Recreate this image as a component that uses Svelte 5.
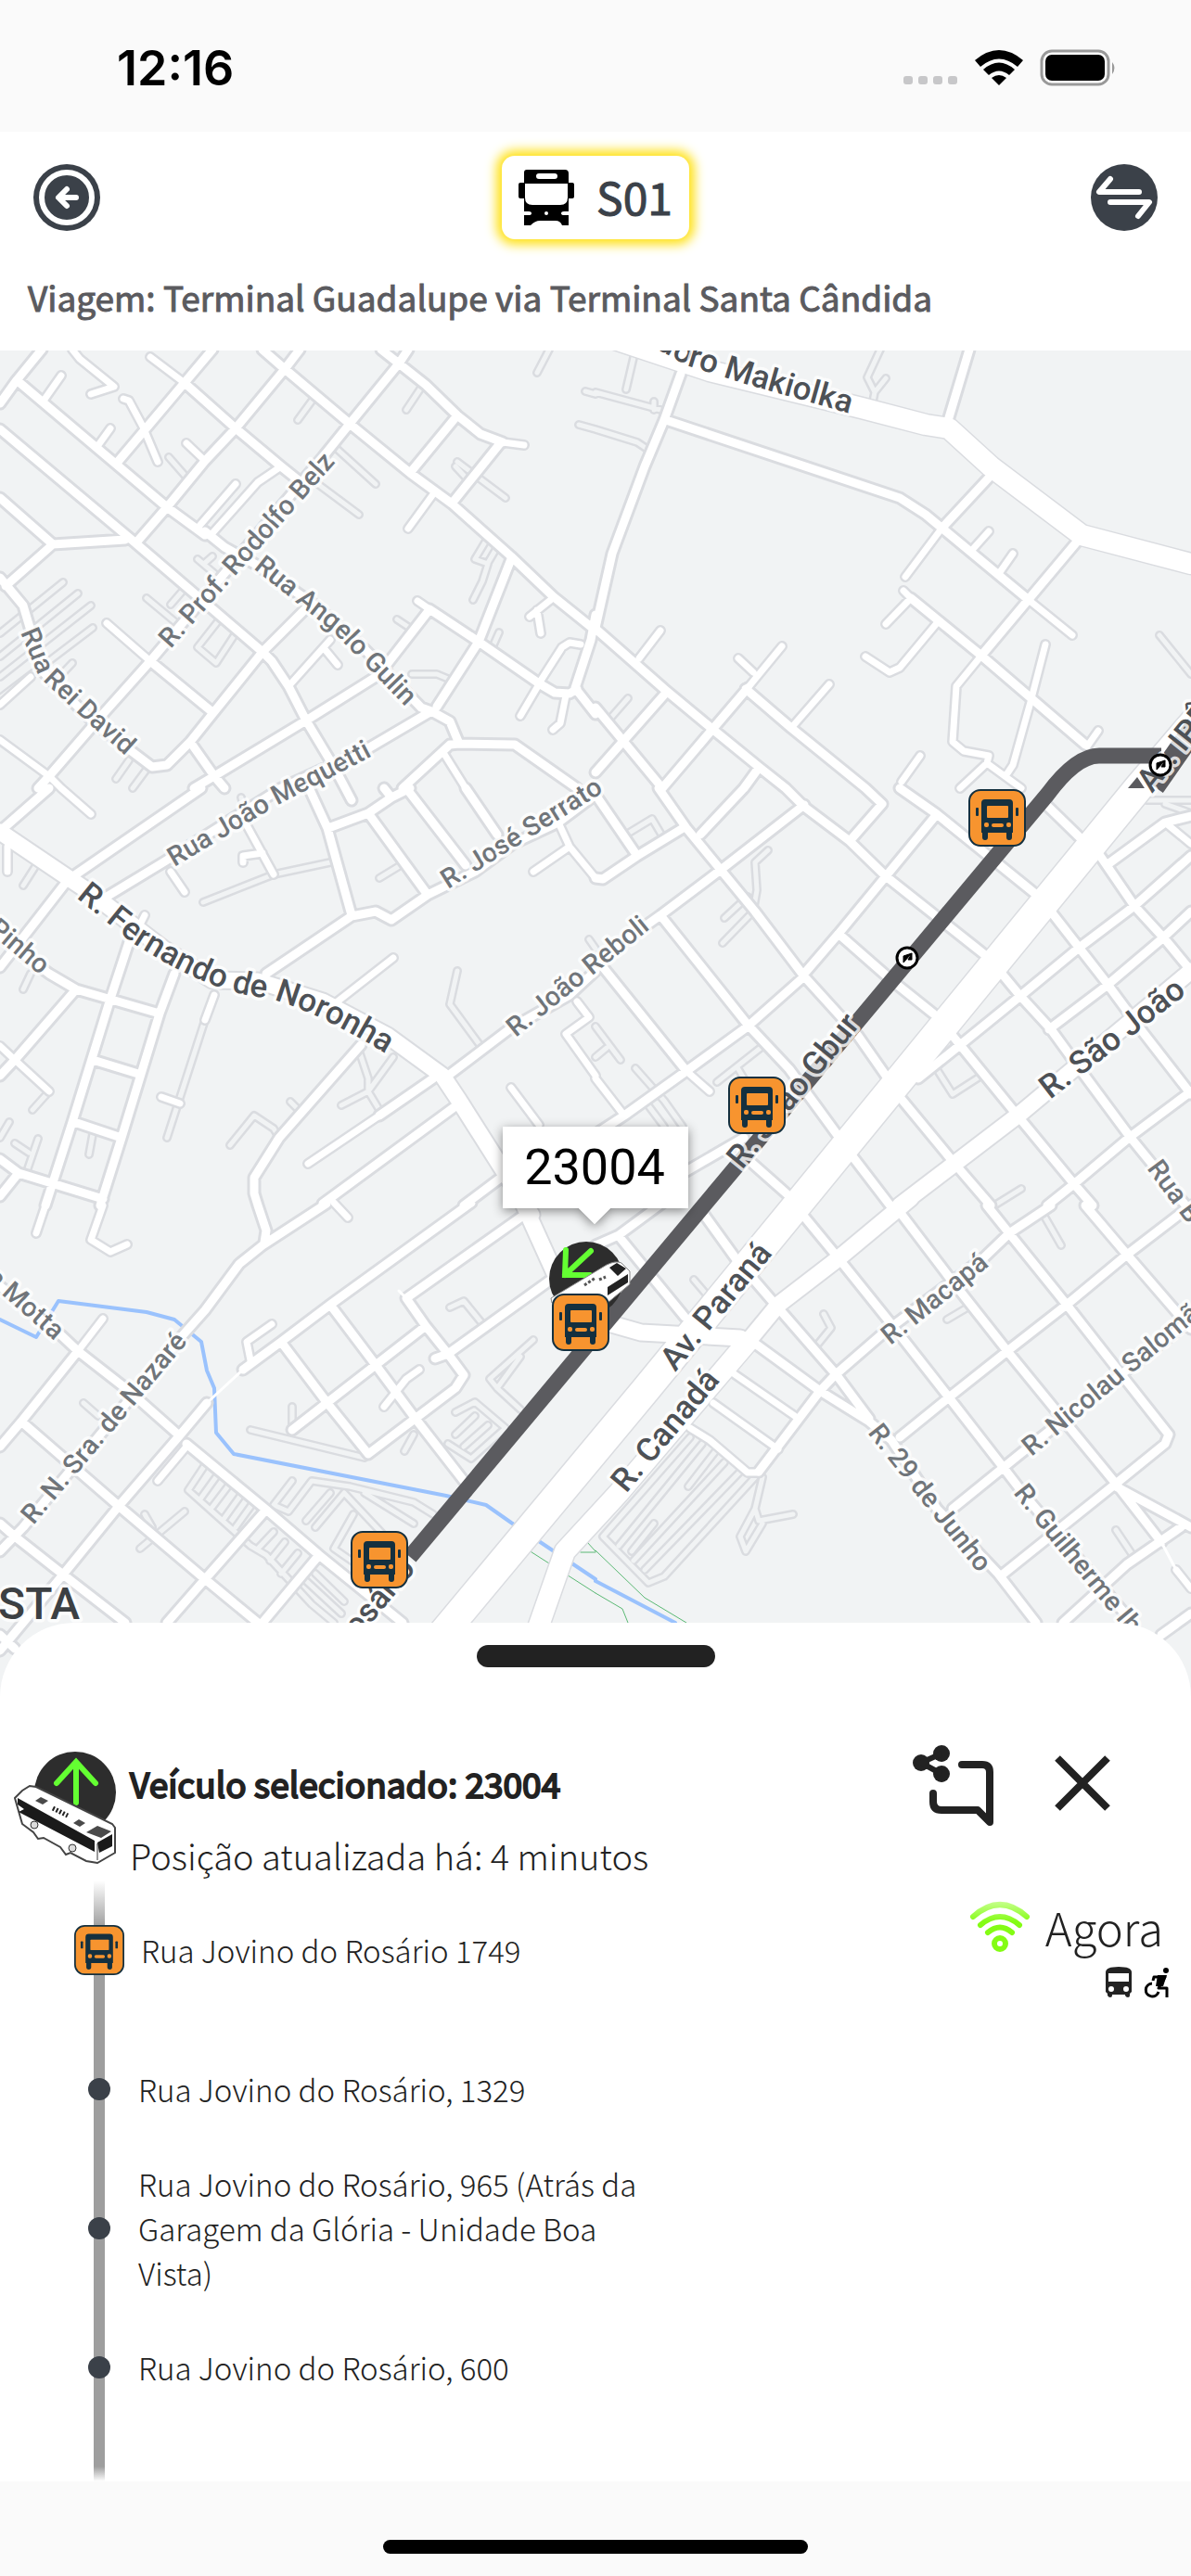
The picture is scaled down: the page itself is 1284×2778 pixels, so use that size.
<script>
  // Roads are digitised per map sheet; every sheet has its own origin on the map
  const sheets = {
    a: [0, 370],
    b: [642, 370],
    c: [0, 850],
    d: [642, 850],
    e: [0, 1300],
    f: [642, 1300],
  };

  function toPath(line) {
    const [sheet, ...points] = line.trim().split(/\s+/);
    const [ox, oy] = sheets[sheet];
    return (
      "M" +
      points
        .map((point) => {
          const [x, y] = point.split(",").map(Number);
          return `${Math.round(ox + x / 2.4424)} ${Math.round(oy + y / 3)}`;
        })
        .join("L")
    );
  }

  const toPaths = (text) => text.trim().split("\n").map(toPath).join("");

  const streets = toPaths(`
    a 110,20 45,120 0,195
    a 45,120 440,530 540,620
    a 0,280 350,640 690,1000 715,1030 760,1110 805,1220 880,1370 925,1480
    a 485,130 620,275 740,400 800,460
    a 560,20 310,385
    a 790,20 750,85 620,275 540,380 440,530 360,645
    a 690,20 750,85 920,260 1080,420 1190,520 1345,690 1455,820 1568,930
    a 1075,20 1050,65 920,260 850,370 395,1030 270,1200 130,1400 100,1440
    a 1005,20 1050,65 1120,135 1205,235 1265,295 1325,320
    a 1205,235 1080,420
    a 1320,320 1190,520
    a 0,500 140,650 330,635
    a 140,650 15,785
    a 0,760 60,850 80,930 110,1060 250,1230 400,1370 440,1365 500,1290 560,1200 690,1000 820,840
    a 395,1030 560,1195
    a 500,1290 565,1400 590,1440
    a 990,1080 805,1220 565,1400 510,1440
    a 540,610 590,660 680,720 830,850 960,990 1110,1180 1135,1190 1185,1225 1210,1295
    a 1135,1190 970,1310 740,1440
    a 1210,1295 1185,1300 1060,1440
    a 1210,1295 1355,1300 1520,1440
    a 1345,700 1260,965 1150,1175
    a 1130,860 1260,965 1420,1100 1460,1130 1500,1135 1520,1120
    a 1125,870 1000,1070
    a 1568,880 1555,960 1515,1115 1568,1200
    b 985,20 940,200 925,260
    b 225,100 180,250 130,400 45,680 0,920
    b 185,250 800,500 870,555 1140,830
    b 1040,430 910,600
    b 1270,640 1015,1010
    b 830,825 1015,1010 1290,1300
    b 0,925 180,1120 310,1250 430,1370 500,1440
    b 185,1130 0,1390
    b 400,1115 175,1440
    b 395,1120 515,1245 710,1440
    b 0,1180 175,1440
    b 430,1375 390,1440
    c 130,0 10,130
    c 530,0 185,290
    c 170,310 0,580
    c 740,0 430,240 280,350
    c 805,-20 862,130 925,410
    c 865,130 970,80 1030,30 1080,0
    c 1010,0 1030,30
    c 970,80 1125,345
    c 1070,0 1225,250
    c 1225,0 1310,150
    c 700,600 925,415 990,400 1030,425 1125,345 1250,270 1350,180 1470,110 1568,20
    c 0,480 130,600 200,650 420,730
    c 200,650 40,880 0,930
    c 345,480 290,680 190,1080 120,1350
    c 460,600 420,730 320,1130 265,1350
    c 245,880 365,925
    c 195,1080 320,1130
    c 0,1200 50,1245 270,1330
    c 50,1245 0,1320
    c 950,830 735,1130 670,1260 670,1310 680,1350
    c 1180,930 1340,780 1500,670 1568,590
    c 1140,940 1000,1060
    c 1200,1030 850,1345
    c 1320,1260 1220,1350
    d 500,0 550,60 670,170 765,285 1025,540
    d 710,0 755,50 670,170
    d 800,0 900,85 1155,340
    d 900,85 765,285 640,470 550,600
    d 640,470 780,620 890,730
    d 1180,45 1280,165
    d 550,55 330,265 170,410 0,560
    d 165,0 240,130 330,265 420,400 550,610 690,800 765,930
    d 390,0 275,150
    d 0,20 110,220
    d 235,125 110,220 20,295 0,290
    d 170,410 400,765 510,910 635,1120
    d 550,610 400,770 240,915 75,1060 0,1120
    d 20,580 240,915
    d 380,1180 510,1320
    d 390,1130 240,1240
    d 1325,210 1420,380 1500,490 1568,590
    d 1200,400 1345,630 1440,790 1568,990
    d 1070,600 1115,670 1200,780 1270,900 1410,1130 1568,1370
    d 940,800 1100,1040 1260,1280 1310,1350
    d 800,1000 950,1220 1040,1350
    d 670,1180 790,1370
    d 1568,220 1420,380 1270,520 1115,675 960,830 850,940
    d 1568,400 1490,490 1345,640 1195,780
    d 1568,90 1500,110 1345,250
    d 1568,980 1405,1130 1250,1290 1190,1350
    e 680,0 700,80 695,120
    e 860,-5 690,130 630,190 540,340 480,420 60,1040 0,1120
    e 1240,-10 870,320 740,440 640,530
    e 545,640 470,750 315,970 165,1195 0,1440
    e 1370,40 1070,300 1120,390 1180,480 1220,550 1200,590 970,805
    e 740,440 860,635 970,805
    e 870,320 990,515 1095,690 1220,890
    e 1120,390 770,725
    e 1450,240 1180,480 1145,495
    e 0,260 160,420 205,470 340,600 470,740
    e 490,770 700,985 840,1130 1060,1350
    e 205,470 55,700 0,780
    e 55,700 315,975 540,1210 680,1350
    e 0,1030 40,1070 165,1195 330,1350
    e 700,985 540,1210 440,1350
    e 840,1130 690,1350
    e 0,1390 40,1435
    f 280,20 370,170 475,320 635,550 720,690
    f 60,100 235,360
    f 0,130 60,95 200,-30
    f 550,35 640,170 790,400 930,620 1075,850 1130,940 1400,1330
    f 800,20 930,230 1085,470 1235,700 1370,900 1490,1090
    f 1030,0 1090,90 1240,320 1400,570 1510,740 1500,770 1370,900 1075,1190
    f 1290,0 1400,160 1568,400
    f 1200,0 1090,90 1020,170 760,410 630,550 590,600 430,860
    f 1568,0 1400,160 1240,320 1085,470 930,620 800,750
    f 1568,370 1120,800 940,980
    f 1370,910 1568,1040
    f 1540,1040 1400,1160 1230,1350
    f 1568,1320 1490,1390
    f 400,430 590,600 720,700 780,760 900,980 1060,1190 1160,1350
  `);

  const lanes = toPaths(`
    a 395,45 485,130
    a 1325,320 1380,330
    a 280,905 395,1030
    a 1165,1320 1225,1440
    a 1100,835 1130,860
    a 1420,1105 1370,1205
    a 1490,1140 1475,1230 1455,1252
    a 1420,1100 1480,985 1500,970 1530,975
    a 1455,825 1395,885
    a 1415,865 1425,940
    a 190,20 210,50 300,140 240,165
    a 160,105 115,185
    a 325,180 340,185 375,270 415,385
    a 290,275 260,330
    a 490,325 540,380
    a 620,455 525,590
    a 740,400 680,450 560,615
    a 1140,490 1075,600
    a 80,1080 0,1170
    a 870,960 765,1105
    a 855,990 890,1040
    a 0,1285 130,1400 160,1440
    b 1140,830 1255,945
    b 910,600 815,755
    b 1015,1010 950,1110 940,1290 970,1320 1035,1335 1030,1360 960,1440
    b 810,800 830,825 765,910
    b 900,905 800,1050 775,1065 710,1015
    b 1035,610 995,665
    b 1100,680 1065,740
    b 1185,975 1145,1160 1100,1365 1080,1400
    b 1030,1360 1120,1440
    b 1325,1255 1295,1305
    b 170,930 115,1020
    b 490,980 400,1115
    b 375,1020 415,1065
    b 615,1105 515,1245
    b 855,1335 805,1420
    c 160,0 240,85
    c 20,190 20,270
    c 450,270 485,335
    c 650,120 720,280
    c 690,210 640,220 640,240
    c 1470,110 1500,190 1568,290
    c 1500,190 1405,270
    c 1035,550 880,700
    c 380,410 345,500
    c 0,835 40,880 130,980
    c 565,670 540,750
    c 425,1000 475,1020
    c 1000,1060 810,1215
    c 1345,970 1420,1090
    c 1520,690 1550,740 1490,795 1568,930
    d 0,940 75,1060
    d 240,915 300,980
    d 1500,110 1568,180
    e 120,0 95,90
    e 270,0 240,110 290,150 335,125
    e 880,-10 915,40
    e 715,385 650,440 660,500
    e 1105,530 1070,560 1010,650
    e 270,365 205,470
    e 490,780 415,890
    f 360,540 535,690
    f 310,640 480,790
    f 250,720 300,760 400,865 430,865
    f 1530,1180 1568,1240
  `);

  const alleys = toPaths(`
    a 445,370 495,440
    a 830,170 785,250
    a 1110,145 1070,215
    a 885,340 990,455
    a 820,440 945,555
    a 1445,20 1415,95
    a 1568,165 1540,155
    a 1568,280 1525,265
    a 1205,385 1330,500
    a 1200,400 1230,440
    a 1280,640 1250,700 1285,715 1270,770 1245,830
    a 1310,660 1285,710
    a 165,775 0,940
    a 205,810 0,1015
    a 240,850 0,1080
    a 245,920 0,1150
    a 190,1035 150,1090
    a 520,700 570,750
    a 385,825 460,900
    a 480,800 450,845
    a 560,690 540,710
    a 575,900 520,985 570,1035 620,940
    a 1045,895 1090,930
    a 1085,1070 1150,1070 1180,1085
    a 1315,935 1295,990
    a 340,1350 305,1410
    a 390,1370 350,1440
    b 750,20 715,110 735,160 730,190
    b 765,115 735,160
    b 0,160 180,220
    b 0,280 110,320 140,345
    b 105,20 80,150
    b 155,190 155,215
    b 85,1150 35,1220
    b 1485,945 1568,1070
    c 95,250 60,315
    c 80,600 60,650
    c 635,30 650,100
    c 870,240 720,280 535,370
    c 1055,250 1000,290
    c 130,980 85,1040
    c 245,1120 235,1185
    c 100,1135 70,1240
    c 40,1150 75,1180
    c 25,1080 0,1130
    c 540,750 440,1130
    c 945,850 970,940 970,980 900,1025
    c 1035,870 970,980 1000,1040
    c 765,1015 790,1045
    c 735,1130 720,1100 670,1060 605,1155
    c 1205,590 1185,700 1265,835
    c 1550,490 1568,520
    d 1120,1295 1050,1350
    d 895,900 940,990 1015,930
    d 1450,40 1568,40
    d 1500,50 1568,80
    d 80,150 150,100 180,165
    d 455,200 420,240 425,330 415,400 335,500
    d 400,350 340,420
    d 435,840 320,950
    d 375,910 390,940
    d 0,770 65,880
    d 30,840 0,870
    d 105,905 180,1010 230,1095
    d 130,1010 180,1095
    e 770,650 770,725
    e 660,725 960,815
    e 1185,330 1220,310 1275,390
    e 1090,740 1065,795
    e 1405,435 1290,560 1310,590 1370,660
    e 1370,490 1310,590
    e 220,640 260,680
    e 380,1000 400,1040
    e 485,990 370,1110
    e 540,840 495,920 660,1100 700,1130 820,1290 880,1350
    e 575,870 530,945
    e 605,900 560,975
    e 635,935 590,1010
    e 665,965 620,1040
    e 720,1055 680,1110
    e 750,1090 710,1150
    e 785,1125 740,1190
    e 770,890 720,970 760,990 820,890 920,910 1090,960 1140,1000
    e 870,930 805,1020
    e 905,930 830,1040
    e 905,930 1060,1130
    e 960,930 1090,1030
    e 930,1000 880,1110 960,1180
    e 800,1210 900,1320
    e 830,1190 905,1280
    e 1200,670 1250,635 1330,720 1240,820 1180,770
    e 1250,680 1200,740
    e 1285,710 1220,780
    f 250,750 20,1070 140,1220 180,1200 420,880
    f 280,770 60,1100
    f 340,830 100,1150
    f 380,860 130,1180
    f 320,790 245,910
    f 155,1030 95,1120
    f 440,880 420,980 430,1020 520,1000
    f 420,980 380,1070 395,1120 440,1030
    f 600,350 620,395 580,460
    f 980,330 925,370
    f 1180,30 1225,130
    f 260,240 300,300
    f 1370,1050 1420,1140
  `);

  const mainRoads = toPaths(`
    c 0,140 180,290 240,340 430,520 560,620 680,625 850,690 1020,800 1165,930 1210,1010 1400,1380
    e 1380,0 1460,220 1568,360
    f 0,370 120,410 380,430
    d 1568,590 1120,1050 800,1350
    f 830,-25 640,170 480,320 400,440
  `);

  const avenues = toPaths(`
    b 30,-20 300,90 700,210 870,265 930,275 1040,400 1280,620 1568,715
    f 400,440 60,930 -80,1120 -160,1400
  `);

  const expressway = toPaths(`
    d 1600,-245 1430,0 530,1350 130,1950 -500,2880
  `);

  const footpaths = toPaths(`
    e 640,530 545,640
    f 1490,1090 1530,1180
    e 1050,275 1070,300
  `);

  const river = toPaths(`
    e 0,370 95,425 155,310 385,345 460,370 530,440 545,535 565,590 568,735 615,805 1175,940 1280,968 1345,1025 1568,1210
    f 0,1215 210,1350
  `);

  const trails = toPaths(`
    e 485,740 500,770
    e 1385,1110 1568,1255
    f 0,1115 130,1270 240,1350
    f 0,1255 70,1305 85,1350
    e 1530,1122 1568,1122
    e 1545,1090 1568,1120
  `);

  const labels = [
    { text: "R. Prof. Rodolfo Belz", d: "M184 700L366 494" },
    { text: "Rua Angelo Gulin", d: "M273 613L360 682L460 786" },
    { text: "Rua Rei David", d: "M22 682L42 730L90 775L180 855" },
    { text: "Rua João Mequetti", d: "M188 935L300 868L440 795" },
    { text: "R. José Serrato", d: "M483 959L569 905L680 836" },
    { text: "R. João Reboli", d: "M556 1119L730 978" },
    { text: "Pinho", d: "M-14 1004L70 1074" },
    { text: "a Motta", d: "M-16 1380L90 1474" },
    { text: "R. N. Sra. de Nazaré", d: "M36 1645L222 1424" },
    { text: "R. Macapá", d: "M960 1451L1090 1346" },
    { text: "R. Nicolau Salomão", d: "M1112 1571L1340 1382" },
    { text: "R. 29 de Junho", d: "M935 1545L994 1620L1080 1728" },
    { text: "R. Guilherme Ih", d: "M1092 1610L1133 1662L1240 1790" },
    { text: "Rua B", d: "M1236 1260L1320 1374" },
    { text: "R. Fernando de Noronha", d: "M82 968L143 1017Q229 1072 287 1076Q350 1092 450 1158", big: true },
    { text: "Av. Paraná", d: "M728 1480L858 1322", big: true },
    { text: "R. Canadá", d: "M675 1611L806 1454", big: true },
    { text: "R. São João", d: "M1132 1186L1310 1048", big: true },
    { text: "R. João Gbur", d: "M800 1262L958 1068", big: true },
    { text: "eodoro Makiolka", d: "M672 356L740 394L800 413L980 464", big: true },
    { text: "Rosário", d: "M372 1784L476 1660", big: true },
    { text: "Av. IPÊ", d: "M1242 856L1330 745", big: true },
  ];

  const mapStops = [
    { x: 1044, y: 851 },
    { x: 785, y: 1161 },
    { x: 595, y: 1395 },
    { x: 378, y: 1651 },
  ];

  const headings = [
    { x: 1251, y: 825 },
    { x: 978, y: 1033 },
  ];

  const stops = [
    { name: "Rua Jovino do Rosário 1749", current: true },
    { name: "Rua Jovino do Rosário, 1329" },
    { name: "Rua Jovino do Rosário, 965 (Atrás da Garagem da Glória - Unidade Boa Vista)" },
    { name: "Rua Jovino do Rosário, 600" },
  ];

  const vehicle = "23004";
</script>

{#snippet stopIcon()}
  <rect x="1" y="1" width="60" height="60" rx="12" fill="#f7942f" stroke="#14303f" stroke-width="2" />
  <path
    d="M18 11h26q4 0 4 4v32h-1v5q0 3-3 3t-3-3v-5H21v5q0 3-3 3t-3-3v-5h-1V15q0-4 4-4z"
    fill="#14303f"
  />
  <rect x="20" y="18" width="23" height="13" rx="1" fill="#f7942f" />
  <rect x="17" y="36" width="5" height="5" rx="2" fill="#f7942f" />
  <rect x="25" y="37" width="13" height="4" rx="2" fill="#f7942f" />
  <rect x="41" y="36" width="5" height="5" rx="2" fill="#f7942f" />
  <rect x="8" y="20" width="3" height="9" rx="1" fill="#14303f" />
  <rect x="51" y="20" width="3" height="9" rx="1" fill="#14303f" />
{/snippet}

<div class="screen">
  <div class="status">
    <span class="time">12:16</span>
    <svg class="signals" viewBox="0 0 230 40" aria-hidden="true">
      <g fill="#c7c7c9">
        <rect x="0" y="29" width="10" height="9" rx="3" />
        <rect x="16" y="29" width="10" height="9" rx="3" />
        <rect x="32" y="29" width="10" height="9" rx="3" />
        <rect x="48" y="29" width="10" height="9" rx="3" />
      </g>
      <path d="M77 12q26-22 52 0l-6 7q-20-17-40 0z" />
      <path d="M86 22q17-15 34 0l-6 6q-11-9-22 0z" />
      <path d="M95 31q8-6 16 0l-8 8z" />
      <rect x="149" y="2" width="72" height="36" rx="11" fill="#fff" stroke="#999" stroke-width="3" />
      <rect x="153" y="6" width="64" height="28" rx="7" />
      <path d="M225 14q5 6 0 13z" fill="#999" />
    </svg>
  </div>

  <header>
    <div class="bar">
      <button class="round" aria-label="Voltar">
        <svg viewBox="0 0 72 72">
          <circle cx="36" cy="36" r="36" fill="#3b4149" />
          <circle cx="36" cy="36" r="27" fill="none" stroke="#fff" stroke-width="6" />
          <path
            d="M46 36H28M36 27l-9 9 9 9"
            fill="none"
            stroke="#fff"
            stroke-width="6"
            stroke-linecap="round"
            stroke-linejoin="round"
          />
        </svg>
      </button>

      <div class="line">
        <svg viewBox="0 0 60 60" aria-hidden="true">
          <path
            fill-rule="evenodd"
            d="M9 0h41q4 0 4 4v10h4q2 0 2 2v13q0 2-2 2h-4v29h-7q-2-5-7-5H23q-5 0-10 5H6V31H2q-2 0-2-2V16q0-2 2-2h4V3q0-3 3-3zM22 4q-3 0-3 3t3 3h17q3 0 3-3t-3-3zM7 15v15q0 8 8 8h30q8 0 8-8V15zM6 45v4h5q3 0 3-2t-3-2zM54 45h-5q-3 0-3 2t3 2h5zM30 45a2 2 0 100 4 2 2 0 000-4z"
          />
        </svg>
        <span>S01</span>
      </div>

      <button class="round" aria-label="Inverter sentido">
        <svg viewBox="0 0 72 72">
          <circle cx="36" cy="36" r="36" fill="#3b4149" />
          <path
            d="M21 16L9 30h43M51 56l12-15H21"
            fill="none"
            stroke="#fff"
            stroke-width="6"
            stroke-linecap="round"
            stroke-linejoin="round"
          />
        </svg>
      </button>
    </div>
    <h1>Viagem: Terminal Guadalupe via Terminal Santa Cândida</h1>
  </header>

  <svg class="map" viewBox="0 378 1284 1452" role="img" aria-label="Mapa da linha S01">
    <defs>
      {#each labels as label, i}
        <path id="label-{i}" d={label.d} />
      {/each}
      <filter id="lift" x="-20%" y="-20%" width="140%" height="150%">
        <feDropShadow dx="0" dy="3" stdDeviation="6" flood-opacity="0.45" />
      </filter>
    </defs>

    <rect y="378" width="1284" height="1452" fill="#f1f3f4" />
    <g fill="none" stroke="#fff" stroke-linecap="round" stroke-linejoin="round">
      <path d={trails} stroke="#5bb974" stroke-width="1" />
      <path d={river} stroke="#9ac2fd" stroke-width="4" />
      <path d={alleys} stroke="#dadce0" stroke-width="10" />
      <path d={alleys} stroke="#f1f3f4" stroke-width="5" />
      <g stroke="#dadce0">
        <path d={lanes} stroke-width="12" />
        <path d={streets} stroke-width="15" />
        <path d={mainRoads} stroke-width="21" />
        <path d={avenues} stroke-width="25" />
        <path d={expressway} stroke-width="34" />
      </g>
      <path d={lanes} stroke-width="7" />
      <path d={footpaths} stroke-width="3" />
      <path d={streets} stroke-width="9" />
      <path d={mainRoads} stroke-width="17" />
      <path d={avenues} stroke-width="22" />
      <path d={expressway} stroke-width="31" />
    </g>

    <!-- bus route -->
    <g fill="none" stroke="#5b5b5f" stroke-width="17">
      <path d="M442 1679L1129 857Q1160 815 1185 815H1252" />
      <path d="M1244 848L1300 768" stroke-width="24" />
      <path d="M1216 850l10-12 8 12z" stroke="none" fill="#5b5b5f" />
    </g>

    <g class="labels">
      {#each labels as label, i}
        <text class:big={label.big}><textPath href="#label-{i}">{label.text}</textPath></text>
      {/each}
      <text class="district" x="86" y="1746">BOA VISTA</text>
    </g>

    {#each headings as { x, y }}
      <g transform="translate({x} {y})">
        <circle r="11" fill="#fff" stroke="#000" stroke-width="3" />
        <path d="M5-5L-4 5l0-7zM5-5l0 7-4 0z" fill="#000" stroke="#000" />
      </g>
    {/each}

    <!-- selected vehicle -->
    <g>
      <circle cx="632" cy="1379" r="40" fill="#2d2d2d" />
      <path
        d="M637 1349l-28 26M610 1348l-1 27 27 0"
        fill="none"
        stroke="#64ff32"
        stroke-width="6"
        stroke-linecap="round"
      />
      <path d="M594 1400l60-36q10-5 16-2l9 9v14l-24 20h-60z" fill="#fff" stroke="#888" />
      <path d="M657 1367l8-5 10 6-9 8zM655 1388l22-14v9l-22 14z" fill="#222" />
      <path d="M630 1386l12-8M646 1380l7-3" stroke="#555" stroke-width="3" stroke-dasharray="3 2" />
    </g>

    {#each mapStops as { x, y }}
      <g transform="translate({x} {y})">{@render stopIcon()}</g>
    {/each}

    <g filter="url(#lift)">
      <path d="M542 1215h200v88h-84l-17 17-17-17h-82z" fill="#fff" />
    </g>
    <text class="callout" x="641" y="1277">{vehicle}</text>
  </svg>

  <section class="sheet">
    <div class="handle"></div>

    <div class="selected">
      <svg class="vehicle" viewBox="0 0 110 122" aria-hidden="true">
        <circle cx="66" cy="45" r="44" fill="#2d2d2d" />
        <path
          d="M67 56V12M46 35L67 12l21 23"
          fill="none"
          stroke="#64ff32"
          stroke-width="6"
          stroke-linecap="round"
        />
        <path
          d="M1 51l8-8 8-5 7 1 82 40 3 4v27l-19 11-12-2-17-9-5 2-6-8-18-10-6 1-5-7-12-9z"
          fill="#fff"
          stroke="#444"
          stroke-width="2"
        />
        <path d="M4 51l83 46v12L5 66l6-3-7-5z" fill="#1a1a1a" />
        <path d="M90 99l16-9v13l-14 7z" fill="#1a1a1a" />
        <path d="M78 88l12-7 15 6-11 7zM23 54l6-4 8 4-6 4zM64 78l6-4 7 4-6 4z" fill="#4a4a4a" />
        <path d="M42 62l16 8" stroke="#222" stroke-width="5" stroke-dasharray="2 2" />
        <circle cx="22" cy="80" r="4" fill="#ddd" stroke="#333" />
        <circle cx="63" cy="105" r="4" fill="#ddd" stroke="#333" />
        <path d="M90 100v18" stroke="#333" />
      </svg>

      <div class="about">
        <h2>Veículo selecionado: {vehicle}</h2>
        <p>Posição atualizada há: 4 minutos</p>
      </div>

      <button aria-label="Compartilhar">
        <svg class="share" viewBox="0 0 88 88" fill="#222">
          <circle cx="9" cy="19" r="9" />
          <circle cx="31" cy="9" r="9" />
          <circle cx="31" cy="31" r="9" />
          <path d="M31 9L9 19l22 12" fill="none" stroke="#222" stroke-width="6" />
          <path
            d="M53 21h22q8 0 8 8v54L70 70H31q-9 0-9-9v-9"
            fill="none"
            stroke="#222"
            stroke-width="8"
            stroke-linecap="round"
            stroke-linejoin="round"
          />
        </svg>
      </button>
      <button aria-label="Fechar">
        <svg class="close" viewBox="0 0 62 62">
          <path d="M4 4l54 54M58 4L4 58" stroke="#222" stroke-width="8" />
        </svg>
      </button>
    </div>

    <ol class="stops">
      {#each stops as stop}
        <li>
          {#if stop.current}
            <svg class="stop" viewBox="0 0 62 62" aria-hidden="true">{@render stopIcon()}</svg>
          {:else}
            <i class="dot"></i>
          {/if}
          <span class="name">{stop.name}</span>
          {#if stop.current}
            <div class="arrival">
              <div class="now">
                <svg class="live" viewBox="0 0 66 56" aria-hidden="true">
                  <defs>
                    <linearGradient id="fade" x1="0" y1="0" x2="0" y2="56" gradientUnits="userSpaceOnUse">
                      <stop offset="0" stop-color="#c8ff90" />
                      <stop offset="0.4" stop-color="#84fc14" />
                    </linearGradient>
                  </defs>
                  <g fill="none" stroke="url(#fade)" stroke-width="6" stroke-linecap="round">
                    <path d="M4 17q29-26 58 0M12 26q21-18 42 0M20 34q13-11 26 0" />
                    <circle cx="33" cy="46" r="6" />
                  </g>
                </svg>
                <strong>Agora</strong>
              </div>
              <svg class="access" viewBox="0 0 68 36" aria-hidden="true">
                <path
                  fill="#222"
                  fill-rule="evenodd"
                  d="M0 7Q0 1 14 1t14 6v21l-2 2v2q0 2-2 2t-3-2v-1H7v1q0 2-2 2t-3-2v-2l-2-2zM3 8v9h22V8zM6 22a3 3 0 100 6 3 3 0 000-6zM22 22a3 3 0 100 6 3 3 0 000-6z"
                />
                <circle cx="65" cy="5" r="3" />
                <path d="M51 16l1-4h12l-7 12h9v10" fill="none" stroke="#000" stroke-width="3" stroke-linejoin="round" />
                <path d="M56 10h10l-4 12h-8z" />
                <path d="M50 19a7 7 0 107 9" fill="none" stroke="#000" stroke-width="3" />
              </svg>
            </div>
          {/if}
        </li>
      {/each}
    </ol>
  </section>

  <div class="home"><i></i></div>
</div>

<style>
  :global(body) {
    background: #fafafa;
  }

  .screen {
    font-family: "Noto Sans CJK SC", "Noto Sans", sans-serif;
    color: #222;
    min-height: 100vh;
    display: flex;
    flex-direction: column;
  }

  button {
    border: 0;
    padding: 0;
    background: none;
    display: flex;
    cursor: pointer;
  }

  .status {
    height: 142px;
    padding: 4px 80px 0 126px;
    box-sizing: border-box;
    display: flex;
    align-items: center;
    justify-content: space-between;
  }
  .time {
    font-family: Inter, sans-serif;
    font-size: 52px;
    font-weight: 600;
    color: #000;
  }
  .signals {
    width: 230px;
    height: 40px;
  }

  header {
    background: white;
    height: 236px;
    padding: 26px 36px 0;
    box-sizing: border-box;
  }
  .bar {
    display: flex;
    align-items: center;
    justify-content: space-between;
  }
  .round svg {
    width: 72px;
    height: 72px;
  }
  .line {
    height: 90px;
    padding: 0 18px;
    border-radius: 14px;
    background: white;
    box-shadow: 0 0 12px 6px #ffe21a;
    display: flex;
    align-items: center;
    gap: 24px;
  }
  .line svg {
    width: 60px;
    height: 60px;
  }
  .line span {
    padding-bottom: 4px;
    font-size: 48px;
    line-height: 60px;
    -webkit-text-stroke: 1px;
    color: #3b4149;
  }
  h1 {
    margin: 32px 0 0 -6px;
    font-size: 37px;
    line-height: 60px;
    font-weight: 400;
    -webkit-text-stroke: 1px;
    color: #5b5b5f;
  }

  .map {
    display: block;
    width: 100%;
  }
  .labels text {
    font-family: Roboto, sans-serif;
    font-size: 29px;
    font-weight: 500;
    fill: #70757a;
    stroke: rgba(255, 255, 255, 0.8);
    stroke-width: 7px;
    stroke-linejoin: round;
    paint-order: stroke;
  }
  .labels .big {
    font-size: 35px;
    fill: #4d5156;
  }
  .labels .district {
    font-size: 48px;
    fill: #3c4043;
    text-anchor: end;
  }
  .callout {
    font-family: Roboto, sans-serif;
    font-size: 54px;
    text-anchor: middle;
  }

  .sheet {
    position: relative;
    margin-top: -80px;
    background: white;
    border-radius: 80px 80px 0 0;
    padding-top: 24px;
  }
  .handle {
    width: 257px;
    height: 24px;
    margin: 0 auto;
    border-radius: 12px;
    background: #222;
  }
  .selected {
    display: flex;
    align-items: flex-start;
    padding: 84px 86px 0 15px;
    height: 230px;
    box-sizing: border-box;
  }
  .vehicle {
    width: 110px;
    height: 122px;
    margin-top: 6px;
  }
  .about {
    flex: 1;
    margin: 2px 0 0 15px;
  }
  h2,
  p {
    margin: 0;
    font-size: 37px;
    line-height: 78px;
    font-weight: 400;
  }
  h2 {
    -webkit-text-stroke: 2px;
  }
  p {
    font-size: 38px;
    font-weight: 300;
  }
  .share {
    width: 88px;
    height: 88px;
  }
  .close {
    width: 62px;
    height: 62px;
    margin: 10px 0 0 64px;
  }

  .stops {
    list-style: none;
    margin: 0;
    padding: 0 24px 48px 80px;
    background: linear-gradient(#fff, #9e9e9e 50px, #9e9e9e calc(100% - 16px), #fff) 101px 0 / 12px 100% no-repeat;
  }
  li {
    height: 150px;
    display: flex;
    align-items: center;
  }
  .stop {
    width: 54px;
    height: 54px;
  }
  .dot {
    width: 24px;
    height: 24px;
    margin: 0 15px;
    border-radius: 50%;
    background: #3b4149;
  }
  .name {
    width: 560px;
    margin-left: 15px;
    font-size: 33px;
    line-height: 48px;
    font-weight: 300;
  }
  .stop + .name {
    margin-left: 18px;
  }
  .arrival {
    margin-left: auto;
    display: flex;
    flex-direction: column;
    align-items: flex-end;
    gap: 14px;
  }
  .now {
    display: flex;
    align-items: center;
    gap: 16px;
    padding-right: 6px;
  }
  .live {
    width: 66px;
    height: 56px;
  }
  strong {
    font-size: 49px;
    line-height: 56px;
    font-weight: 300;
  }
  .access {
    width: 68px;
    height: 36px;
  }

  .home {
    flex: 1;
    min-height: 102px;
    box-sizing: border-box;
    padding-bottom: 24px;
    display: flex;
    align-items: flex-end;
    justify-content: center;
  }
  .home i {
    width: 458px;
    height: 15px;
    border-radius: 8px;
    background: black;
  }
</style>
